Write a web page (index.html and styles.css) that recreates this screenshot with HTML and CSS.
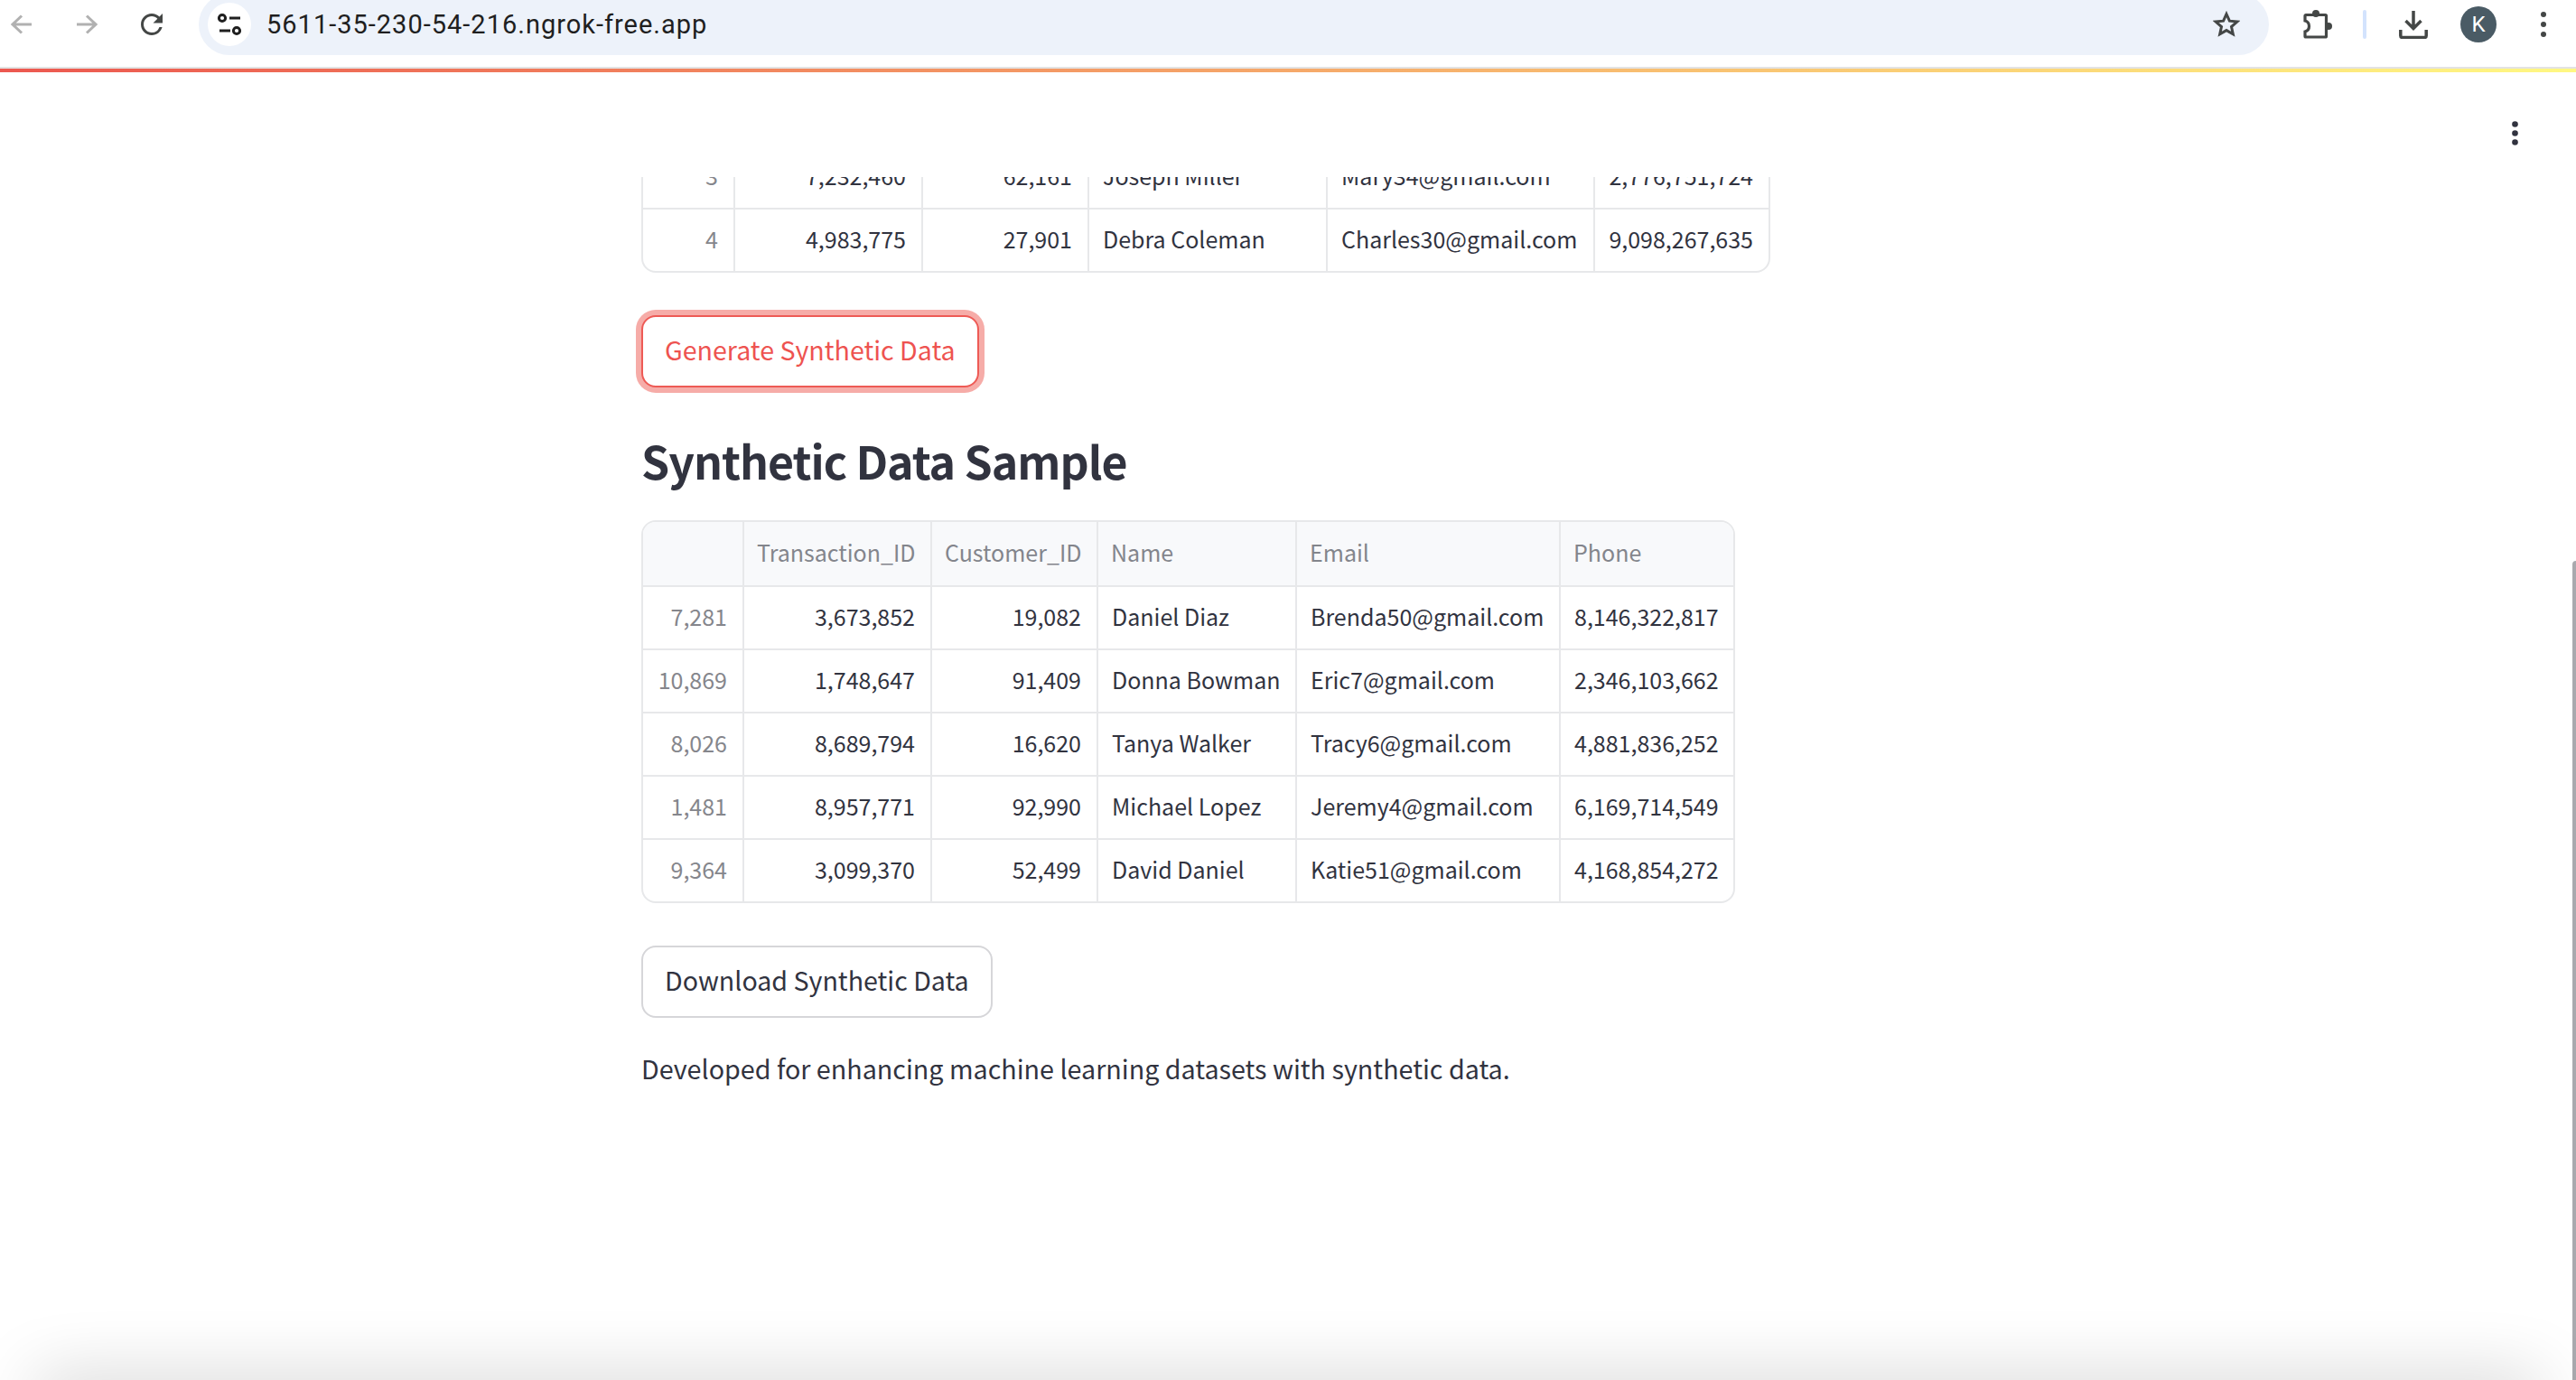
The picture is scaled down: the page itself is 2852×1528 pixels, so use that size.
FILE: index.html
```html
<!DOCTYPE html>
<html lang="en">
<head>
    <meta charset="UTF-8">
    <title>Synthetic Data</title>
    <link rel="stylesheet" href="styles.css">
</head>
<body>

    <!-- browser toolbar -->
    <div class="toolbar">
        <svg class="nav-icon" viewBox="0 0 24 24"><path class="nav-stroke" d="M23 12H2M12 2.5 2 12l10 9.5"/></svg>
        <svg class="nav-icon forward" viewBox="0 0 24 24"><path class="nav-stroke" d="M1 12h21M12 2.5 22 12l-10 9.5"/></svg>
        <svg class="nav-icon reload" viewBox="4 4 16 16"><path class="icon-fill" d="M17.65 6.35A7.958 7.958 0 0 0 12 4c-4.42 0-7.99 3.58-7.99 8s3.57 8 7.99 8c3.73 0 6.84-2.55 7.73-6h-2.08A5.99 5.99 0 0 1 12 18c-3.31 0-6-2.69-6-6s2.69-6 6-6c1.66 0 3.14.69 4.22 1.78L13 11h7V4l-2.35 2.35z"/></svg>
        <div class="omnibox">
            <span class="site-chip">
                <svg class="tune-icon" viewBox="0 0 48 48">
                    <circle class="tune-stroke" cx="16" cy="17" r="3.6"/>
                    <path class="tune-stroke" d="M24 17h12M13 31h12"/>
                    <circle class="tune-stroke" cx="32" cy="31" r="3.6"/>
                </svg>
            </span>
            <span class="url">5611-35-230-54-216.ngrok-free.app</span>
            <svg class="star-icon" viewBox="0 0 30 30"><path class="star-stroke" d="M15 3.5l3.4 7.7 8.4.8-6.3 5.6 1.8 8.2L15 21.6l-7.3 4.2 1.8-8.2L3.2 12l8.4-.8z"/></svg>
        </div>
        <svg class="puzzle-icon" viewBox="0 0 32 32">
            <path class="puzzle-stroke" d="M3 5.5h21.5a1 1 0 0 1 1 1v22.5a1 1 0 0 1-1 1H3a1 1 0 0 1-1-1v-5c3-.8 4.5-3 4.5-6s-1.500-5.200-4.500-6v-5.500a1 1 0 0 1 1-1z"/>
            <circle class="icon-fill" cx="14" cy="4" r="4"/>
            <circle class="icon-fill" cx="28" cy="18" r="4"/>
        </svg>
        <span class="divider"></span>
        <svg class="download-icon" viewBox="0 0 32 32">
            <path class="download-stroke" d="M16 1v19M7.500 12l8.500 8.500 8.500-8.500M1.800 22v6.500a2 2 0 0 0 2 2h24.400a2 2 0 0 0 2-2V22"/>
        </svg>
        <span class="avatar">K</span>
        <svg class="chrome-menu" viewBox="0 0 6 28">
            <circle class="icon-fill" cx="3" cy="3" r="3"/>
            <circle class="icon-fill" cx="3" cy="14" r="3"/>
            <circle class="icon-fill" cx="3" cy="25" r="3"/>
        </svg>
    </div>
    <div class="decoration"></div>

    <!-- app header -->
    <div class="app-header">
        <svg class="app-menu" viewBox="0 0 7 27">
            <circle cx="3.500" cy="3.500" r="3.300"/>
            <circle cx="3.500" cy="13.500" r="3.300"/>
            <circle cx="3.500" cy="23.500" r="3.300"/>
        </svg>
    </div>

    <main class="content">
        <div class="table-clip">
            <div class="table-wrap">
                <table class="data-table original">
                    <colgroup>
                        <col class="w102"><col class="w208"><col class="w184"><col class="w264"><col class="w296"><col class="w192">
                    </colgroup>
                    <tbody>
                        <tr><td class="idx num">3</td><td class="num">7,232,460</td><td class="num">62,161</td><td>Joseph Miller</td><td>Mary34@gmail.com</td><td class="num">2,776,751,724</td></tr>
                        <tr><td class="idx num">4</td><td class="num">4,983,775</td><td class="num">27,901</td><td>Debra Coleman</td><td>Charles30@gmail.com</td><td class="num">9,098,267,635</td></tr>
                    </tbody>
                </table>
            </div>
        </div>

        <button class="st-button focused">Generate Synthetic Data</button>

        <h2>Synthetic Data Sample</h2>

        <div class="table-wrap">
            <table class="data-table synthetic">
                <colgroup>
                    <col class="w112"><col class="w208"><col class="w184"><col class="w220"><col class="w292"><col class="w191">
                </colgroup>
                <thead>
                    <tr><th></th><th>Transaction_ID</th><th>Customer_ID</th><th>Name</th><th>Email</th><th>Phone</th></tr>
                </thead>
                <tbody>
                    <tr><td class="idx num">7,281</td><td class="num">3,673,852</td><td class="num">19,082</td><td>Daniel Diaz</td><td>Brenda50@gmail.com</td><td class="num">8,146,322,817</td></tr>
                    <tr><td class="idx num">10,869</td><td class="num">1,748,647</td><td class="num">91,409</td><td>Donna Bowman</td><td>Eric7@gmail.com</td><td class="num">2,346,103,662</td></tr>
                    <tr><td class="idx num">8,026</td><td class="num">8,689,794</td><td class="num">16,620</td><td>Tanya Walker</td><td>Tracy6@gmail.com</td><td class="num">4,881,836,252</td></tr>
                    <tr><td class="idx num">1,481</td><td class="num">8,957,771</td><td class="num">92,990</td><td>Michael Lopez</td><td>Jeremy4@gmail.com</td><td class="num">6,169,714,549</td></tr>
                    <tr><td class="idx num">9,364</td><td class="num">3,099,370</td><td class="num">52,499</td><td>David Daniel</td><td>Katie51@gmail.com</td><td class="num">4,168,854,272</td></tr>
                </tbody>
            </table>
        </div>

        <button class="st-button download">Download Synthetic Data</button>

        <p class="footer-note">Developed for enhancing machine learning datasets with synthetic data.</p>
    </main>

    <div class="scroll-thumb"></div>
    <div class="bottom-shadow"></div>

</body>
</html>
```

FILE: styles.css
```css
* {
    box-sizing: border-box;
}

html, body {
    height: 1528px;
}

body {
    margin: 0;
    overflow: hidden;
    position: relative;
    background-color: #fff;
    color: #31333f;
    font-family: "Noto Sans CJK SC", "Noto Sans", sans-serif;
}

/* browser toolbar */
.toolbar {
    height: 76px;
    padding: 0 0 20px 12px;
    border-bottom: 2px solid #e3e3e3;
    display: flex;
    align-items: center;
}

.nav-icon {
    width: 24px;
    height: 24px;
    flex: none;
}

.forward,
.reload {
    margin-left: 48px;
}

.nav-stroke {
    fill: none;
    stroke: #b1b1b1;
    stroke-width: 3;
}

.icon-fill {
    fill: #444746;
}

.omnibox {
    width: 2292px;
    height: 68px;
    margin-left: 40px;
    padding: 0 32px 0 10px;
    flex: none;
    border-radius: 34px;
    background-color: #edf2fa;
    display: flex;
    align-items: center;
}

.site-chip {
    width: 48px;
    height: 48px;
    border-radius: 50%;
    background-color: #fff;
    flex: none;
}

.tune-icon {
    width: 48px;
    height: 48px;
    display: block;
}

.tune-stroke {
    fill: none;
    stroke: #1f1f1f;
    stroke-width: 3;
}

.url {
    margin-left: 17px;
    font-family: Roboto, sans-serif;
    font-size: 29px;
    letter-spacing: 1px;
    color: #1f1f1f;
}

.star-icon {
    width: 30px;
    height: 30px;
    margin-left: auto;
}

.star-stroke {
    fill: none;
    stroke: #444746;
    stroke-width: 3;
}

.puzzle-icon {
    width: 32px;
    height: 32px;
    margin-left: 38px;
    flex: none;
}

.puzzle-stroke {
    fill: none;
    stroke: #444746;
    stroke-width: 3.200;
}

.divider {
    width: 4px;
    height: 32px;
    margin-left: 34px;
    border-radius: 2px;
    background-color: #d3e3fd;
    flex: none;
}

.download-icon {
    width: 32px;
    height: 32px;
    margin-left: 36px;
    flex: none;
}

.download-stroke {
    fill: none;
    stroke: #444746;
    stroke-width: 3.500;
}

.avatar {
    width: 40px;
    height: 40px;
    margin-left: 36px;
    border-radius: 50%;
    background-color: #4a5b65;
    color: #fff;
    font-family: Roboto, sans-serif;
    font-size: 24px;
    line-height: 40px;
    text-align: center;
    flex: none;
}

.chrome-menu {
    width: 6px;
    height: 28px;
    margin-left: 49px;
    flex: none;
}

.decoration {
    height: 4px;
    background-image: linear-gradient(90deg, #ec5850, #fff883);
}

/* app header */
.app-header {
    height: 116px;
    padding: 54px 64px 0 0;
    display: flex;
    justify-content: flex-end;
}

.app-menu {
    width: 7px;
    height: 27px;
    fill: #31333f;
}

/* main column */
.content {
    width: 1432px;
    margin: 0 auto;
}

.table-clip {
    height: 106px;
    overflow: hidden;
    display: flex;
    flex-direction: column;
    justify-content: flex-end;
}

.table-wrap {
    width: fit-content;
    border: 2px solid #e7e8ea;
    border-radius: 16px;
    overflow: hidden;
    flex: none;
}

.data-table {
    border-collapse: separate;
    border-spacing: 0;
    table-layout: fixed;
    font-size: 25px;
    line-height: 34px;
}

.original { width: 1246px; }
.synthetic { width: 1207px; }

.w102 { width: 102px; }
.w112 { width: 112px; }
.w184 { width: 184px; }
.w191 { width: 191px; }
.w192 { width: 192px; }
.w208 { width: 208px; }
.w220 { width: 220px; }
.w264 { width: 264px; }
.w292 { width: 292px; }
.w296 { width: 296px; }

.data-table th,
.data-table td {
    height: 70px;
    padding: 0 17px 5px 15px;
    border-right: 2px solid #e7e8ea;
    border-bottom: 2px solid #e7e8ea;
    white-space: nowrap;
    overflow: hidden;
    font-weight: 400;
    text-align: left;
}

.data-table th {
    height: 72px;
    padding: 0 8px 4px 14px;
    background-color: #f8f9fb;
    color: #83858c;
}

.data-table th:last-child,
.data-table td:last-child {
    border-right: none;
}

.data-table tbody tr:last-child td {
    height: 68px;
    border-bottom: none;
}

.data-table .num {
    text-align: right;
}

.data-table .idx {
    color: #85868c;
}

.st-button {
    display: block;
    height: 80px;
    padding: 0 24px 4px;
    border: 2px solid #d6d6d9;
    border-radius: 16px;
    background-color: #fff;
    color: #31333f;
    font-family: inherit;
    font-size: 28.6px;
    line-height: 40px;
    cursor: pointer;
}

.focused {
    margin-top: 47px;
    border-color: #ee5a55;
    color: #ee5350;
    box-shadow: 0 0 0 6px #f6aca8;
}

.download {
    margin-top: 47px;
}

h2 {
    margin: 44px 0 0;
    height: 103px;
    font-size: 50px;
    line-height: 72px;
    font-weight: 700;
    letter-spacing: -0.02em;
}

.footer-note {
    margin: 32px 0 0;
    font-size: 28.7px;
    line-height: 48px;
}

/* overlays */
.scroll-thumb {
    position: absolute;
    top: 621px;
    right: 0;
    bottom: 0;
    width: 4px;
    border-top-left-radius: 4px;
    background-color: #a9a9ae;
}

.bottom-shadow {
    position: absolute;
    left: 40px;
    right: 40px;
    bottom: -40px;
    height: 40px;
    box-shadow: 0 0 76px rgba(0, 0, 0, 0.22);
}
```
